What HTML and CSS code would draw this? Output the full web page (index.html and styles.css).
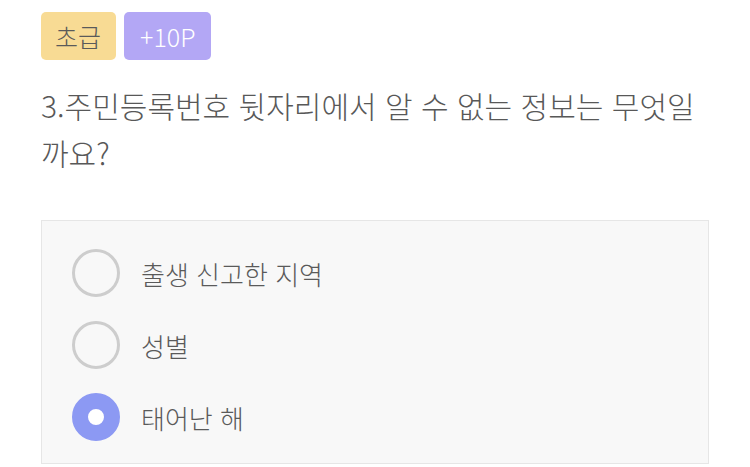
FILE: index.html
```html
<!DOCTYPE html>
<html lang="ko">
<head>
  <meta charset="UTF-8">
  <title>퀴즈</title>
  <meta name="viewport" content="width=device-width, initial-scale=1.0">
  <link rel="stylesheet" href="styles.css">
</head>
<body>

  <div class="quiz">
    <div class="tags">
      <span class="tag level">초급</span>
      <span class="tag point">+10P</span>
    </div>

    <p class="question">3.주민등록번호 뒷자리에서 알 수 없는 정보는 무엇일까요?</p>

    <div class="choices">
      <label class="choice">
        <span class="radio"></span>
        <span class="label">출생 신고한 지역</span>
      </label>
      <label class="choice">
        <span class="radio"></span>
        <span class="label">성별</span>
      </label>
      <label class="choice">
        <span class="radio checked"></span>
        <span class="label">태어난 해</span>
      </label>
    </div>
  </div>

</body>
</html>
```

FILE: styles.css
```css
body {
  margin: 0;
  font-family: "Noto Sans CJK KR", "Noto Sans", sans-serif;
  font-weight: 300;
  color: #555;
  background: #fff;
}
.quiz {
  padding: 12px 41px 0 41px;
}
.tags {
  display: flex;
  gap: 8px;
}
.tag {
  display: flex;
  align-items: center;
  justify-content: center;
  height: 48px;
  padding: 0 15px 0 14px;
  border-radius: 5px;
  font-size: 25px;
}
.level {
  background: #f8db94;
  color: #5a5a5a;
}
.point {
  background: #b3a7f5;
  color: #fff;
  padding: 0 16px;
}
.question {
  margin: 22px 0 0 0;
  font-size: 30px;
  line-height: 47px;
  color: #585858;
}
.choices {
  margin-top: 44px;
  border: 1px solid #e6e6e6;
  background: #f8f8f8;
  padding: 16px 30px 10px 30px;
}
.choice {
  display: flex;
  align-items: center;
  height: 72px;
}
.radio {
  box-sizing: border-box;
  width: 48px;
  height: 48px;
  border: 3px solid #cdcdcd;
  border-radius: 50%;
  margin-right: 21px;
}
.radio.checked {
  border: 16px solid #8c99f3;
  background: #fff;
}
.label {
  font-size: 26px;
  color: #5a5a5a;
}
```
